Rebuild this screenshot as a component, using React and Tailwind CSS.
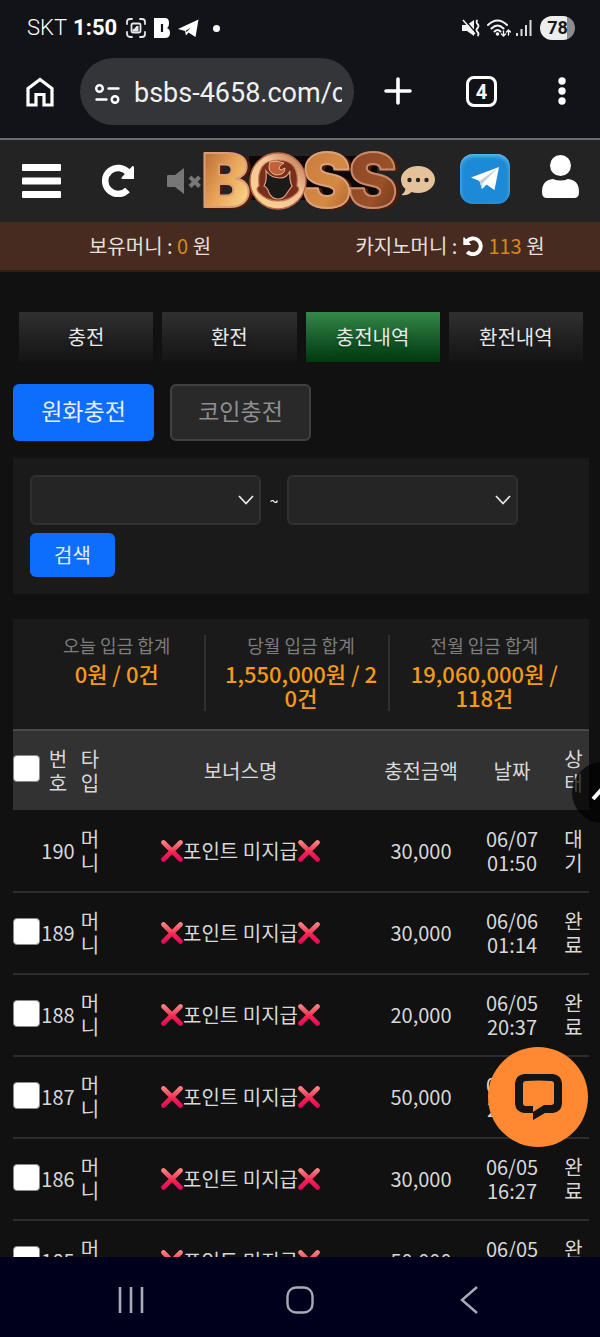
import React, { useState } from "react"

const deposits = [
  { id: 190, type: "머니", amount: "30,000", date: "06/07", time: "01:50", status: "대기" },
  { id: 189, type: "머니", amount: "30,000", date: "06/06", time: "01:14", status: "완료" },
  { id: 188, type: "머니", amount: "20,000", date: "06/05", time: "20:37", status: "완료" },
  { id: 187, type: "머니", amount: "50,000", date: "06/05", time: "20:08", status: "완료" },
  { id: 186, type: "머니", amount: "30,000", date: "06/05", time: "16:27", status: "완료" },
  { id: 185, type: "머니", amount: "50,000", date: "06/05", time: "15:42", status: "완료" },
]

const summaries = [
  { label: "오늘 입금 합계", value: "0원 / 0건" },
  { label: "당월 입금 합계", value: "1,550,000원 / 20건" },
  { label: "전월 입금 합계", value: "19,060,000원 / 118건" },
]

const tabs = ["충전", "환전", "충전내역", "환전내역"]

function StatusBar() {
  return (
    <div className="flex h-14 shrink-0 items-center pr-[25px] pl-[27px] font-['Roboto',sans-serif] text-[22px] leading-none text-white">
      <span className="font-light">SKT</span>
      <span className="ml-[6px] font-bold">1:50</span>
      <svg className="ml-[9px] h-5 w-5" viewBox="0 0 20 20" fill="none" stroke="#e6e6e6" strokeWidth="1.8" strokeLinecap="round">
        <path d="M1 6V4a3 3 0 0 1 3-3h2M14 1h2a3 3 0 0 1 3 3v2M19 14v2a3 3 0 0 1-3 3h-2M6 19H4a3 3 0 0 1-3-3v-2" />
        <rect x="5.500" y="5.500" width="9" height="9" rx="1.500" />
        <path d="M6.500 13.500v-2l2-1 2-2.500h2v5.500z" fill="#e6e6e6" stroke="none" />
      </svg>
      <svg className="ml-2 h-5 w-4" viewBox="0 0 16 20">
        <path d="M0 0h11q4 0 4 5 0 4-2 5 3 1 3 5 0 5-5 5H0z" fill="#fff" />
        <path d="M8 6v8" stroke="#121318" strokeWidth="2.200" />
      </svg>
      <svg className="ml-2 h-[19px] w-[21px]" viewBox="0 0 21 19">
        <path d="M0 10 20.500 0.500 17.500 18 10.500 13.500 8 16.500 7 12z" fill="#fff" />
        <path d="M7.500 12 13 8.500 8.500 13z" fill="#121318" />
      </svg>
      <span className="ml-[14px] h-[7px] w-[7px] rounded-full bg-white" />

      <svg className="ml-auto h-[18px] w-[18px]" viewBox="0 0 18 18">
        <path d="M0 6h5l7-5v16l-7-5H0z" fill="#f3f3f3" />
        <path d="M2 0 14 14" stroke="#121318" strokeWidth="1.500" />
        <path d="M1 1 13 15" stroke="#f3f3f3" strokeWidth="1.500" />
        <path d="M15.500 1q-2 2 0 4t0 4 0 4 0 4" fill="none" stroke="#f3f3f3" strokeWidth="1.800" />
      </svg>
      <svg className="ml-[7px] h-[19px] w-6" viewBox="0 0 24 19" fill="none" stroke="#f3f3f3" strokeWidth="2" strokeLinecap="round">
        <path d="M1 6q9.500-9 19 0M4.500 9.500q6-6 12 0M7.500 12.500q3-3 6 0" />
        <path d="M16.500 12v5m-2-2 2 2 2-2M21.500 16v-5m-2 2 2-2 2 2" strokeWidth="1.400" />
        <circle cx="10.500" cy="15" r=".8" fill="#f3f3f3" />
      </svg>
      <svg className="ml-[5px] h-4 w-4" viewBox="0 0 16 16" stroke="#dcdcdc" strokeWidth="2">
        <path d="M1 13v3M5.500 9v7M10 5v11M14.500 0v16" />
      </svg>
      <span className="ml-2 flex h-6 w-[35px] items-center justify-center rounded-full bg-linear-to-r from-[#ededed] from-78% to-[#8c8c8e] to-78% text-[18px] font-bold text-[#17181c]">
        78
      </span>
    </div>
  )
}

function BrowserBar() {
  return (
    <div className="flex h-[84px] shrink-0 items-start border-b-2 border-[#6b6c6e] pr-[34px] pl-[26px] font-['Roboto',sans-serif] text-white">
      <button type="button" aria-label="Home" className="mt-[21px]">
        <svg className="h-[30px] w-7" viewBox="0 0 28 30" fill="none" stroke="#fff" strokeWidth="3.200">
          <path d="M2 28V11.500L14 2.500l12 9V28h-8V17.500h-8V28z" />
        </svg>
      </button>
      <div className="mt-[2px] ml-[26px] flex h-[67px] min-w-0 flex-1 items-center rounded-full bg-[#343539] pt-1 pr-[12px] pl-[15px]">
        <svg className="h-5 w-[25px] shrink-0" viewBox="0 0 25 20" fill="none" stroke="#fff" strokeWidth="2.400" strokeLinecap="round">
          <circle cx="4.500" cy="4.500" r="3.300" />
          <path d="M13.500 4.500h10M1.500 15.500h10" />
          <circle cx="20" cy="15.500" r="3.300" />
        </svg>
        <label htmlFor="address" className="sr-only">주소</label>
        <input
          id="address"
          readOnly
          defaultValue="bsbs-4658.com/c"
          className="ml-[14px] w-full min-w-0 bg-transparent text-[27px] text-[#f1f1f1] outline-none"
        />
      </div>
      <button type="button" aria-label="New tab" className="mt-[21px] ml-[30px]">
        <svg className="h-7 w-7" viewBox="0 0 28 28" stroke="#fff" strokeWidth="3.600" strokeLinecap="round">
          <path d="M14 2v24M2 14h24" />
        </svg>
      </button>
      <button
        type="button"
        className="mt-[20px] ml-[54px] flex h-[31px] w-[31px] items-center justify-center rounded-[8px] border-3 border-white text-[20px] font-bold"
      >
        4
      </button>
      <button type="button" aria-label="Menu" className="mt-[21px] ml-[61px]">
        <svg className="h-7 w-2" viewBox="0 0 8 28" fill="#fff">
          <circle cx="4" cy="4" r="3.700" />
          <circle cx="4" cy="14" r="3.700" />
          <circle cx="4" cy="24" r="3.700" />
        </svg>
      </button>
    </div>
  )
}

function BossLogo() {
  return (
    <svg className="h-[62px] w-[196px]" viewBox="0 0 196 62" role="img" aria-label="BOSS">
      <defs>
        <linearGradient id="gold" x1="0" y1="0" x2="1" y2="1">
          <stop offset="0" stopColor="#a85a2b" />
          <stop offset=".5" stopColor="#e9a558" />
          <stop offset=".8" stopColor="#f7cf83" />
          <stop offset="1" stopColor="#b9692f" />
        </linearGradient>
        <linearGradient id="ring" x1="0" y1="1" x2="1" y2="0">
          <stop offset="0" stopColor="#fbd58e" />
          <stop offset=".6" stopColor="#f3c39a" />
          <stop offset="1" stopColor="#b8683c" />
        </linearGradient>
        <linearGradient id="copper" x1="0" y1="0" x2="1" y2="1">
          <stop offset="0" stopColor="#c9783c" />
          <stop offset=".6" stopColor="#d48a43" />
          <stop offset="1" stopColor="#a95927" />
        </linearGradient>
        <linearGradient id="bronze" x1="0" y1="0" x2="1" y2="1">
          <stop offset="0" stopColor="#8a4526" />
          <stop offset=".6" stopColor="#995128" />
          <stop offset="1" stopColor="#6b3219" />
        </linearGradient>
      </defs>
      <path d="M46 6h128v44H46z" fill="#0b0807" />
      <g fontFamily="Inter, sans-serif" fontWeight="900" fontSize="74" strokeWidth="2" strokeLinejoin="round" className="drop-shadow-[3px_1px_0_#4b1a0d]">
        <text x="145" y="57" fill="url(#bronze)" stroke="#c98a6c">S</text>
        <text x="99" y="57" fill="url(#copper)" stroke="#dba07c">S</text>
        <text x="-2" y="57" fill="url(#gold)" stroke="#dc9c78">B</text>
      </g>
      <circle cx="75" cy="31" r="28" fill="url(#ring)" stroke="#b96a4b" strokeWidth="1.500" />
      <path d="M56 36Q53 10 75 10q22 0 19 26 4 3 0 7-8 8-19 8t-19-8q-4-4 0-7z" fill="#7a2f1c" stroke="#c47a58" strokeWidth="1.200" />
      <path d="M63 21q1 10-2 15 4 2 5 7 3 6 9 6t9-6l5-7q-3-6-2-15-3 7-10 7-9 0-14-7z" fill="#1c1a19" stroke="#e0a080" strokeWidth="1.200" />
      <path d="M67 12q-4 10 6 13 9 0 9-7-4 3-6 1 0-4 5-6-7-3-14-1z" fill="#c0613a" stroke="#edb48f" strokeWidth="1" />
    </svg>
  )
}

function RotateIcon({ className }) {
  return (
    <svg className={className} viewBox="0 0 34 33">
      <path d="M27.500 9A13 13 0 1 0 26.500 26" fill="none" stroke="#fff" strokeWidth="6.500" />
      <path d="M31.500 2q1.500-.5 1.500 1.500V15H21.500q-2-.5-.5-2z" fill="#fff" />
    </svg>
  )
}

function SiteHeader() {
  return (
    <header className="flex h-[82px] shrink-0 items-center bg-[#232323] pr-[21px] pb-px pl-[22px]">
      <button type="button" aria-label="메뉴">
        <svg className="h-[34px] w-[39px]" viewBox="0 0 39 34" fill="#fff">
          <rect y="0" width="39" height="7" rx="1" />
          <rect y="13.500" width="39" height="7" rx="1" />
          <rect y="27" width="39" height="7" rx="1" />
        </svg>
      </button>
      <button type="button" aria-label="새로고침" className="ml-10">
        <RotateIcon className="h-[33px] w-[34px]" />
      </button>
      <div className="mx-auto flex items-center pl-[7px]">
        <button type="button" aria-label="음소거">
          <svg className="h-[26px] w-[34px]" viewBox="0 0 34 26">
            <path d="M1 7h7l9-7v26l-9-7H1q-1 0-1-1V8q0-1 1-1z" fill="#777" />
            <path d="m23 9 9.500 9.500M32.500 9 23 18.500" stroke="#777" strokeWidth="4" />
          </svg>
        </button>
        <a href="#" className="ml-[2px]"><BossLogo /></a>
        <button type="button" aria-label="쪽지" className="ml-[2px] text-[#e6c29b]">
          <svg className="h-[30px] w-[34px]" viewBox="0 0 34 30" fill="currentColor">
            <path d="M17 0C7.500 0 0 6 0 13.500q0 6 4.500 9.500Q4 26.500.5 29q6 1 10-3 3 1 6.500 1c9.500 0 17-6 17-13.500S26.500 0 17 0z" />
            <g fill="#232323">
              <circle cx="8.500" cy="14" r="2.200" />
              <circle cx="17" cy="14" r="2.200" />
              <circle cx="25.500" cy="14" r="2.200" />
            </g>
          </svg>
        </button>
      </div>
      <a href="#" aria-label="텔레그램" className="mb-1 flex h-[50px] w-[50px] items-center justify-center rounded-[13px] bg-[#1c8ad6] inset-shadow-[0_2px_4px_#67bff0]">
        <svg className="h-6 w-7" viewBox="0 0 28 24">
          <path d="M0 10.500 28 0 23.500 23 15.500 17.500 11 22 8.500 14z" fill="#fff" />
          <path d="M8.500 14 28 0 11.500 16.500 11 22z" fill="#c5d0da" />
        </svg>
      </a>
      <button type="button" aria-label="내 정보" className="mb-2 ml-8">
        <svg className="h-[43px] w-[37px]" viewBox="0 0 37 43" fill="#fff">
          <circle cx="18.500" cy="10.500" r="10.500" />
          <path d="M11 24q7.500 3 15 0 11 1 11 13 0 6-5 6H5q-5 0-5-6 0-12 11-13z" />
        </svg>
      </button>
    </header>
  )
}

function Cross() {
  return (
    <svg className="inline-block h-[22px] w-[22px] align-[-3px]" viewBox="0 0 22 22" role="img" aria-label="엑스">
      <defs>
        <linearGradient id="cross" gradientUnits="userSpaceOnUse" x1="0" y1="0" x2="0" y2="22">
          <stop offset="0" stopColor="#ff8f86" />
          <stop offset=".6" stopColor="#f2214f" />
          <stop offset="1" stopColor="#e80560" />
        </linearGradient>
      </defs>
      <path d="m2.500 2.500 17 17M19.500 2.500l-17 17" stroke="url(#cross)" strokeWidth="4.600" strokeLinecap="round" />
    </svg>
  )
}

function DateSelect({ label }) {
  return (
    <div className="relative w-[231px]">
      <select aria-label={label} className="h-[50px] w-full appearance-none rounded-[6px] border-2 border-[#303030] bg-[#252525] px-3">
        <option></option>
      </select>
      <svg className="pointer-events-none absolute top-5 right-[7px] h-[10px] w-4" viewBox="0 0 16 10" fill="none" stroke="#e8e8e8" strokeWidth="1.800">
        <path d="m1 1 7 7.500L15 1" />
      </svg>
    </div>
  )
}

function CheckBox({ label }) {
  return (
    <input
      type="checkbox"
      aria-label={label}
      className="mb-1 block h-[27px] w-[27px] appearance-none rounded-[4px] border border-[#8b8b8b] bg-white checked:bg-[#0d6efd]"
    />
  )
}

function DepositTable() {
  return (
    <table className="w-full table-fixed text-center text-xl leading-6 text-[#d8d8d8]">
      <colgroup>
        <col className="w-7" />
        <col className="w-[34px]" />
        <col className="w-[30px]" />
        <col />
        <col className="w-[90px]" />
        <col className="w-[92px]" />
        <col className="w-[31px]" />
      </colgroup>
      <thead>
        <tr className="h-20 border-t-2 border-[#4a4a4a] bg-[#323232]">
          <th><CheckBox label="전체 선택" /></th>
          <th className="px-1 font-normal break-all">번호</th>
          <th className="px-1 font-normal break-all">타입</th>
          <th className="font-normal">보너스명</th>
          <th className="font-normal">충전금액</th>
          <th className="font-normal">날짜</th>
          <th className="px-1 font-normal break-all">상태</th>
        </tr>
      </thead>
      <tbody>
        {deposits.map((item) => (
          <tr key={item.id} className="h-[82px] border-b-2 border-[#2c2c2c]">
            <td>{item.status !== "대기" && <CheckBox label={`${item.id} 선택`} />}</td>
            <td>{item.id}</td>
            <td className="px-1 break-all">{item.type}</td>
            <td><Cross />포인트 미지급<Cross /></td>
            <td>{item.amount}</td>
            <td>{item.date}<br />{item.time}</td>
            <td className="px-1 break-all">{item.status}</td>
          </tr>
        ))}
      </tbody>
    </table>
  )
}

function SystemNav() {
  return (
    <nav className="relative z-10 grid h-20 shrink-0 grid-cols-[28fr_28fr_28fr] items-center justify-items-center bg-[#00001c] px-[46px] pt-[6px] text-[#a9a9b8]">
      <button type="button" aria-label="최근 앱">
        <svg className="h-[26px] w-[26px]" viewBox="0 0 26 26" stroke="currentColor" strokeWidth="2.600">
          <path d="M2 0v26M13 0v26M24 0v26" />
        </svg>
      </button>
      <button type="button" aria-label="홈">
        <svg className="h-7 w-7" viewBox="0 0 28 28" fill="none" stroke="currentColor" strokeWidth="2.400">
          <rect x="1.500" y="1.500" width="25" height="25" rx="8.500" />
        </svg>
      </button>
      <button type="button" aria-label="뒤로">
        <svg className="h-[28px] w-[18px]" viewBox="0 0 18 28" fill="none" stroke="currentColor" strokeWidth="2.400">
          <path d="M17 1 2 14l15 13" />
        </svg>
      </button>
    </nav>
  )
}

export default function App() {
  const [activeTab, setActiveTab] = useState("충전내역")

  return (
    <div className="relative flex h-screen flex-col overflow-hidden bg-[#111111] font-['Noto_Sans_CJK_KR',sans-serif] text-white">
      <div className="shrink-0 bg-[#121318]">
        <StatusBar />
        <BrowserBar />
      </div>
      <SiteHeader />
      <div className="grid h-[50px] shrink-0 grid-cols-2 items-center border-b-2 border-[#2b1d17] bg-[#472b20] text-center text-xl text-[#e6e0dd]">
        <p>보유머니 : <span className="text-[#d8881a]">0</span> 원</p>
        <p>
          카지노머니 :{" "}
          <button type="button" aria-label="카지노머니 회수" className="align-[-2px]">
            <RotateIcon className="h-5 w-[22px] -scale-x-100" />
          </button>{" "}
          <span className="text-[#d8881a]">113</span> 원
        </p>
      </div>

      <main className="min-h-0 flex-1 overflow-hidden pt-10 pr-[11px] pl-[13px]">
        <div className="grid grid-cols-4 gap-[9px] px-[6px]">
          {tabs.map((tab) => (
            <button
              key={tab}
              type="button"
              onClick={() => setActiveTab(tab)}
              className={`h-[50px] bg-linear-to-b text-xl text-[#e8e8e8] text-shadow-lg ${
                tab === activeTab ? "from-[#34884a] to-[#00390f]" : "from-[#303030] to-[#141414]"
              }`}
            >
              {tab}
            </button>
          ))}
        </div>

        <div className="mt-[22px] flex gap-4 text-[23px]">
          <button type="button" className="h-[57px] w-[141px] rounded-[6px] bg-[#0d6efd] pb-1 text-[#e3edfb]">원화충전</button>
          <button type="button" className="h-[57px] w-[141px] rounded-[6px] border-2 border-[#414141] bg-[#292929] pb-1 text-[#8e8e8e]">
            코인충전
          </button>
        </div>

        <form className="mt-[17px] h-[136px] bg-[#1a1a1a] px-[17px] pt-[17px]" onSubmit={(e)=> e.preventDefault()}>
          <div className="flex items-center">
            <DateSelect label="시작일" />
            <span className="w-[26px] text-center text-base">~</span>
            <DateSelect label="종료일" />
          </div>
          <button type="submit" className="mt-2 h-11 w-[85px] rounded-[6px] bg-[#0d6efd] text-xl text-[#e3edfb]">검색</button>
        </form>

        <section className="mt-[25px] grid h-[110px] grid-cols-3 bg-[#1a1a1a] pt-4 pr-[18px] pl-2 text-center">
          {summaries.map((item) => (
            <div key={item.label} className="h-[76px] border-l-2 border-[#303030] pr-[10px] pl-[18px] first:border-l-0">
              <p className="text-lg leading-5 text-[#7c7c7c]">{item.label}</p>
              <p className="mt-[6px] text-[22px] leading-6 font-medium break-all text-[#f39a17]">{item.value}</p>
            </div>
          ))}
        </section>

        <DepositTable />
      </main>

      <button
        type="button"
        aria-label="맨 위로"
        className="absolute top-[762px] -right-[33px] flex h-[61px] w-[61px] items-center justify-center rounded-full bg-black/70"
      >
        <svg className="h-4 w-6" viewBox="0 0 24 16" fill="none" stroke="#fff" strokeWidth="4">
          <path d="M2 14 12 3l10 11" />
        </svg>
      </button>
      <button
        type="button"
        aria-label="상담"
        className="absolute right-3 bottom-[190px] flex h-[100px] w-[100px] items-center justify-center rounded-full bg-[#ff8833]"
      >
        <svg className="h-[46px] w-[47px]" viewBox="0 0 47 46">
          <path
            d="M9 0Q23.500-1 38 0q8 1 9 9v21q-1 8-9 9h-8l-12 7v-7H9q-8-1-9-9V9q1-8 9-9zm2 7q-3 0-3 3v19q0 3 3 3h7v6l11-7h7q3 0 3-3V10q0-3-3-3-12.500-1-25 0z"
            fill="#141414"
            fillRule="evenodd"
          />
        </svg>
      </button>

      <SystemNav />
    </div>
  )
}
